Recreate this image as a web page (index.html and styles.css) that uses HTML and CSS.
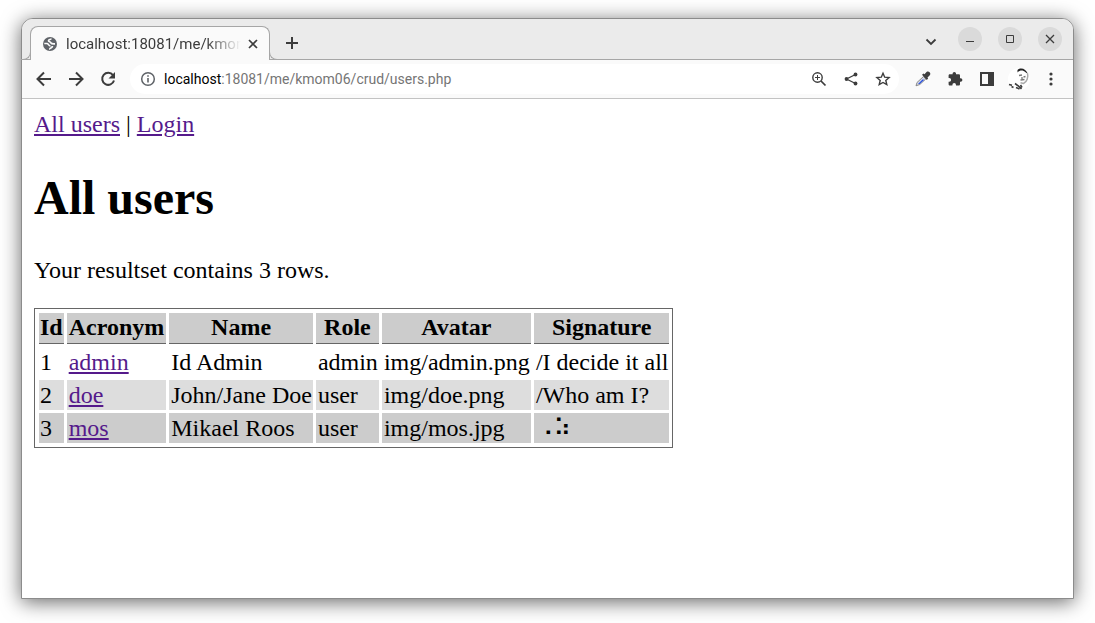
FILE: index.html
```html
<!DOCTYPE html>
<html lang="en">
<head>
<meta charset="utf-8">
<title>All users</title>
<link rel="stylesheet" href="styles.css">
</head>
<body>
<div class="window">
  <header class="tabstrip">
    <div class="tab">
      <svg class="tab-icon" viewBox="0 0 16 16"><circle cx="8" cy="8" r="7" fill="#5f6368"/><path d="M2.300 7.500H5c1.500 0 1.500 2.500 3.500 2.500M8 13.500c-1-1.500 2.500-1.500 2.500-3.500M9 2.500c0 1.500-2.500.5-2.500 2.200 0 1.300 2 .8 2.500 2.300.5 1 2 .8 4 .8" fill="none" stroke="#fafafa" stroke-width="1.700"/></svg>
      <span class="tab-title">localhost:18081/me/kmom</span>
      <button class="icon-btn tab-close" aria-label="Close tab"><svg width="10" height="10" viewBox="0 0 10 10"><path d="M1 1l8 8M9 1l-8 8" stroke="#3c3c3c" stroke-width="1.700"/></svg></button>
    </div>
    <button class="icon-btn new-tab" aria-label="New tab"><svg width="14" height="14" viewBox="0 0 14 14"><path d="M7 1v12M1 7h12" stroke="#3c3c3c" stroke-width="2"/></svg></button>
    <div class="window-controls">
      <button class="icon-btn chevron" aria-label="Search tabs"><svg width="12" height="8" viewBox="0 0 12 8"><path d="M1.500 1.500L6 6l4.500-4.500" fill="none" stroke="#3c3c3c" stroke-width="1.800"/></svg></button>
      <button class="icon-btn round" aria-label="Minimize"><svg width="10" height="10" viewBox="0 0 10 10"><path d="M1 7.500h8" stroke="#3c3c3c"/></svg></button>
      <button class="icon-btn round" aria-label="Maximize"><svg width="10" height="10" viewBox="0 0 10 10"><path d="M1.500 1.500h7v7h-7z" fill="none" stroke="#3c3c3c"/></svg></button>
      <button class="icon-btn round" aria-label="Close"><svg width="10" height="10" viewBox="0 0 10 10"><path d="M1 1l8 8M9 1l-8 8" stroke="#3c3c3c" stroke-width="1.300"/></svg></button>
    </div>
  </header>
  <div class="toolbar">
    <button class="icon-btn nav" aria-label="Back"><svg width="16" height="16" viewBox="0 0 16 16"><path d="M15 8H2M8 1.500L1.500 8 8 14.500" fill="none" stroke="#3c3c3c" stroke-width="2"/></svg></button>
    <button class="icon-btn nav" aria-label="Forward"><svg width="16" height="16" viewBox="0 0 16 16"><path d="M1 8h13M8 1.500L14.500 8 8 14.500" fill="none" stroke="#3c3c3c" stroke-width="2"/></svg></button>
    <button class="icon-btn nav" aria-label="Reload"><svg width="16" height="16" viewBox="0 0 16 16"><path d="M13 4.200A6 6 0 1 0 14 9.500" fill="none" stroke="#3c3c3c" stroke-width="2"/><path d="M15 1v6.500H8.500z" fill="#3c3c3c"/></svg></button>
    <div class="omnibox">
      <svg class="info" width="16" height="16" viewBox="0 0 16 16"><circle cx="8" cy="8" r="6.300" fill="none" stroke="#5f6368" stroke-width="1.500"/><path d="M8 7v4.500M8 4.200v1.600" stroke="#5f6368" stroke-width="1.600"/></svg>
      <span class="url"><span class="host">localhost</span>:18081/me/kmom06/crud/users.php</span>
      <button class="icon-btn action" aria-label="Zoom"><svg width="16" height="16" viewBox="0 0 16 16"><circle cx="6.500" cy="6.500" r="4.700" fill="none" stroke="#3c3c3c" stroke-width="1.400"/><path d="M10 10l4.500 4.500" stroke="#3c3c3c" stroke-width="1.700"/><path d="M6.500 4v5M4 6.500h5" stroke="#3c3c3c"/></svg></button>
      <button class="icon-btn action" aria-label="Share"><svg width="16" height="16" viewBox="0 0 16 16"><path d="M12.500 3.500L3.500 8l9 4.500" fill="none" stroke="#3c3c3c" stroke-width="1.300"/><g fill="#3c3c3c"><circle cx="12.500" cy="3.500" r="1.900"/><circle cx="3.500" cy="8" r="1.900"/><circle cx="12.500" cy="12.500" r="1.900"/></g></svg></button>
      <button class="icon-btn action" aria-label="Bookmark"><svg width="16" height="16" viewBox="0 0 16 16"><path d="M8 2.200l1.700 4 4.400.4-3.300 2.900 1 4.200L8 11.500l-3.800 2.200 1-4.200L1.900 6.600l4.400-.4z" fill="none" stroke="#3c3c3c" stroke-width="1.400"/></svg></button>
    </div>
    <button class="icon-btn nav" aria-label="Color picker"><svg width="16" height="16" viewBox="0 0 16 16"><path d="M1 14.800l1-3.300L8.500 5.500l2.300 2.500-6 5.500z" fill="#d4d8e6" stroke="#808080" stroke-width=".9"/><path d="M3 13l4.500-4.600 1.700.4-4.500 4.200z" fill="#2850e0"/><path d="M7 3.800l1.500-1.200 1 .6 2-2.300c2.200-1.600 5 .9 3.300 3.300l-2.300 2.200.6 1-1.300 1.500z" fill="#3e3e3e"/></svg></button>
    <button class="icon-btn nav" aria-label="Extensions"><svg width="16" height="16" viewBox="0 0 16 16"><path d="M13.700 7.300H13V4.600c0-.8-.6-1.300-1.300-1.300H9V2.600a1.700 1.700 0 0 0-3.400 0v.7H2.900c-.7 0-1.300.5-1.300 1.300v2.500h.7a1.800 1.800 0 0 1 0 3.600h-.7v2.600c0 .7.600 1.300 1.300 1.300h2.500v-.7a1.800 1.800 0 0 1 3.600 0v.7h2.700c.7 0 1.300-.6 1.300-1.300v-2.600h.7a1.700 1.700 0 0 0 0-3.400z" fill="#3c3c3c"/></svg></button>
    <button class="icon-btn nav" aria-label="Side panel"><svg width="16" height="16" viewBox="0 0 16 16"><path d="M1 1h14v14H1zM3 3v10h6V3z" fill="#3c3c3c" fill-rule="evenodd"/></svg></button>
    <button class="icon-btn nav" aria-label="Profile"><svg width="22" height="22" viewBox="0 0 22 22"><circle cx="11" cy="11" r="11" fill="#fff"/><path d="M9.500 2C13-1 18 1 20 6l-2.500-1.800C15 2 12 2 9.500 4.500z" fill="#222"/><path d="M19.500 5.500c1 3.500-.5 8.500-4 10l-3-.8" fill="none" stroke="#aaa" stroke-width="1.500"/><path d="M11 7.500l3-.5M15.500 9l2-.5M12.500 12l4-.5M14 9v2" stroke="#777" stroke-width="1.300"/><path d="M1 16.500l3 .8M3.500 18.500l2 1M7 15.500l3.500 2.500 3 3M8 19.500l3.500 1.500M12.500 17l1.500 2.500" stroke="#3c3c3c" stroke-width="1.600"/></svg></button>
    <button class="icon-btn nav" aria-label="Menu"><svg width="16" height="16" viewBox="0 0 16 16"><g fill="#3c3c3c"><circle cx="8" cy="3" r="1.600"/><circle cx="8" cy="8" r="1.600"/><circle cx="8" cy="13" r="1.600"/></g></svg></button>
  </div>
  <main class="page">
    <nav><a href="#users">All users</a> | <a href="#login">Login</a></nav>
    <h1>All users</h1>
    <p>Your resultset contains 3 rows.</p>
    <table>
      <thead><tr><th>Id</th><th>Acronym</th><th>Name</th><th>Role</th><th>Avatar</th><th>Signature</th></tr></thead>
      <tbody>
        <tr><td>1</td><td><a href="#admin">admin</a></td><td>Id Admin</td><td>admin</td><td>img/admin.png</td><td>/I decide it all</td></tr>
        <tr class="even"><td>2</td><td><a href="#doe">doe</a></td><td>John/Jane Doe</td><td>user</td><td>img/doe.png</td><td>/Who am I?</td></tr>
        <tr class="third"><td>3</td><td><a href="#mos">mos</a></td><td>Mikael Roos</td><td>user</td><td>img/mos.jpg</td><td class="braille">⠠⠵</td></tr>
      </tbody>
    </table>
  </main>
</div>
</body>
</html>
```
FILE: styles.css
```css
* { box-sizing: border-box; }
body {
  margin: 0;
  min-height: 100vh;
  padding: 18px 21px 24px;
  display: flex;
  background: #fff;
  font-family: "Liberation Serif", serif;
  font-size: 24px;
  color: #000;
}
.window {
  flex: 1;
  min-width: 0;
  display: flex;
  flex-direction: column;
  background: #fff;
  border: 1px solid #8c8c8c;
  border-radius: 12px 12px 0 0;
  box-shadow: 0 3px 20px rgba(0, 0, 0, .6);
}
.icon-btn {
  display: flex;
  align-items: center;
  justify-content: center;
  padding: 0;
  border: 0;
  background: none;
  flex: none;
}
.icon-btn svg { flex: none; }
.tabstrip {
  display: flex;
  height: 41px;
  background: #ebebeb;
  border-bottom: 1px solid #a6a6a6;
  border-radius: 11px 11px 0 0;
  padding-left: 8px;
}
.tab {
  position: relative;
  display: flex;
  align-items: center;
  width: 240px;
  height: 34px;
  margin-top: 7px;
  padding: 0 10px 0 11px;
  background: #fafafa;
  border: 1px solid #a6a6a6;
  border-bottom: 0;
  border-radius: 8px 8px 0 0;
}
.tab::before,
.tab::after {
  content: "";
  position: absolute;
  bottom: 0;
  width: 9px;
  height: 9px;
  border: 1px solid #a6a6a6;
  border-top: 0;
}
.tab::before {
  right: 100%;
  border-left: 0;
  border-bottom-right-radius: 8px;
}
.tab::after {
  left: 100%;
  border-right: 0;
  border-bottom-left-radius: 8px;
}
.tab-icon { width: 16px; height: 16px; flex: none; }
.tab-title {
  flex: 1;
  margin: 0 6px 0 8px;
  overflow: hidden;
  white-space: nowrap;
  font: 15px/20px Roboto, sans-serif;
  color: #3c3c3c;
  mask-image: linear-gradient(to right, #000 80%, transparent);
}
.tab-close { width: 12px; height: 16px; }
.new-tab { width: 28px; margin: 7px 0 0 8px; }
.window-controls {
  display: flex;
  align-items: center;
  gap: 16px;
  margin-left: auto;
  padding-right: 11px;
}
.chevron { width: 22px; height: 24px; margin-top: 6px; }
.round { width: 24px; height: 24px; border-radius: 50%; background: #dadada; }
.toolbar {
  display: flex;
  align-items: center;
  gap: 16px;
  height: 39px;
  padding: 0 14px;
  background: #fafafa;
  border-bottom: 1px solid #c3c3c3;
}
.nav { width: 16px; height: 22px; }
.omnibox {
  flex: 1;
  min-width: 0;
  display: flex;
  align-items: center;
  gap: 16px;
  height: 30px;
  margin-left: -2px;
  padding: 0 8px 0 10px;
  border-radius: 15px;
  background: #fff;
}
.info { flex: none; }
.url {
  flex: 1;
  margin-left: -8px;
  overflow: hidden;
  white-space: nowrap;
  font: 14px/20px Roboto, sans-serif;
  color: #757575;
}
.host { color: #000; }
.action { width: 16px; height: 16px; }
.page { padding: 12px; }
nav, p { line-height: 27px; }
a { color: #551a8b; }
h1 { margin: 32px 0; font-size: 48px; line-height: 55px; }
p { margin: 24px 0; }
table {
  border: 1px solid #666;
  border-spacing: 3px;
  padding: 1px 0 1px 1px;
  line-height: 27px;
}
th { padding: 1px 2px 2px; background: #ccc; border-bottom: 1px solid #666; }
td { padding: 2px 1px 1px 2px; }
th:first-child,
td:first-child { padding-left: 1px; padding-right: 1px; }
.even td { background: #ddd; }
.third td { background: #ccc; }
.braille { font-family: "DejaVu Sans", sans-serif; }
```
